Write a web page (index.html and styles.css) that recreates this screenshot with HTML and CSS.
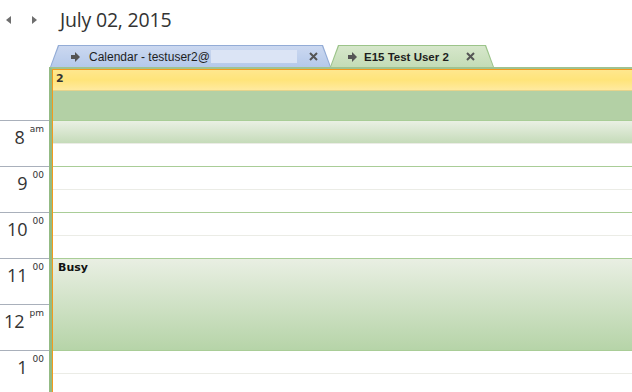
FILE: index.html
```html
<!DOCTYPE html>
<html lang="en">
<head>
    <meta charset="UTF-8">
    <link rel="stylesheet" href="styles.css">
    <title>Calendar</title>
</head>
<body>
    <div class="header">
        <span class="nav nav-left"></span>
        <span class="nav nav-right"></span>
        <h1 class="date">July 02, 2015</h1>
    </div>

    <div class="tabs">
        <div class="tab tab-blue">
            <div class="tab-in">
                <span class="tab-arrow"></span>
                <span class="tab-name">Calendar - testuser2@</span>
                <span class="redact"></span>
                <svg class="tab-close" width="9" height="9" viewBox="0 0 9 9"><path d="M1 1L8 8M8 1L1 8" stroke="#555" stroke-width="2"/></svg>
            </div>
        </div>
        <div class="tab tab-green">
            <div class="tab-in">
                <span class="tab-arrow"></span>
                <span class="tab-name bold">E15 Test User 2</span>
                <svg class="tab-close" width="9" height="9" viewBox="0 0 9 9"><path d="M1 1L8 8M8 1L1 8" stroke="#555" stroke-width="2"/></svg>
            </div>
        </div>
    </div>

    <div class="cal">
        <div class="times">
            <div class="times-top"></div>
            <div class="hour"><span class="h">8</span><sup>am</sup></div>
            <div class="hour"><span class="h">9</span><sup>00</sup></div>
            <div class="hour"><span class="h">10</span><sup>00</sup></div>
            <div class="hour"><span class="h">11</span><sup>00</sup></div>
            <div class="hour"><span class="h">12</span><sup>pm</sup></div>
            <div class="hour"><span class="h">1</span><sup>00</sup></div>
        </div>
        <div class="day">
            <div class="day-in">
                <div class="allday"><span>2</span></div>
                <div class="early"></div>
                <div class="slot hour-line shade"></div>
                <div class="slot"></div>
                <div class="slot hour-line"></div>
                <div class="slot"></div>
                <div class="slot hour-line"></div>
                <div class="slot"></div>
                <div class="busy"><span>Busy</span></div>
                <div class="slot hour-line"></div>
                <div class="slot"></div>
            </div>
        </div>
    </div>
</body>
</html>
```

FILE: styles.css
```css
body{
    margin: 0;
    background: white;
    font-family: 'Open Sans', 'DejaVu Sans', sans-serif;
    overflow: hidden;
}

.header{
    height: 45px;
    display: flex;
    align-items: center;
    padding-left: 6px;
}

.nav{
    width: 0;
    height: 0;
    border-top: 4px solid transparent;
    border-bottom: 4px solid transparent;
    margin-top: -6px;
}

.nav-left{
    border-right: 5px solid #6e6e6e;
    margin-right: 21px;
}

.nav-right{
    border-left: 5px solid #6e6e6e;
    margin-right: 23px;
}

.date{
    margin: -6px 0 0 0;
    font-weight: 400;
    font-size: 19.5px;
    color: #333;
    letter-spacing: -0.2px;
}

.tabs{
    height: 22px;
    display: flex;
    margin-left: 50px;
}

.tab{
    height: 22px;
    clip-path: polygon(8px 0, calc(100% - 8px) 0, 100% 100%, 0 100%);
}

.tab-in{
    height: 21px;
    margin: 1px 1px 0 1px;
    clip-path: polygon(8px 0, calc(100% - 8px) 0, 100% 100%, 0 100%);
    display: flex;
    align-items: center;
    font-family: 'Liberation Sans', sans-serif;
    font-size: 12px;
    color: #1e1e1e;
}

.tab-blue{
    width: 281px;
    background: #93acd6;
}

.tab-blue .tab-in{
    background: linear-gradient(#cbd8f0, #b5c9ea);
}

.tab-green{
    width: 164px;
    margin-left: -1px;
    background: #9cc48a;
}

.tab-green .tab-in{
    background: linear-gradient(#d6e7cb, #c4dcb6);
}

.tab-arrow{
    width: 4px;
    height: 4px;
    background: #555;
    position: relative;
    margin-left: 20px;
    margin-right: 14px;
}

.tab-arrow::after{
    content: "";
    position: absolute;
    left: 4px;
    top: -3px;
    border-top: 5px solid transparent;
    border-bottom: 5px solid transparent;
    border-left: 5px solid #555;
}

.tab-green .tab-arrow{
    margin-left: 17px;
    margin-right: 12px;
}

.bold{
    font-weight: bold;
    font-size: 11.5px;
}

.redact{
    width: 86px;
    height: 13px;
    background: #dbe4f5;
    margin-left: 1px;
}

.tab-close{
    margin-left: auto;
    margin-right: 12px;
}

.tab-green .tab-close{
    margin-right: 18px;
}

.cal{
    display: grid;
    grid-template-columns: 49px 1fr;
}

.times-top{
    height: 53px;
}

.hour{
    height: 45px;
    border-top: 1px solid #a9b0bb;
    text-align: right;
    padding-right: 5px;
    color: #333;
    line-height: 1;
}

.hour .h{
    font-size: 18px;
    font-weight: 400;
    display: inline-block;
    margin-top: 7px;
}

.hour sup{
    font-family: 'DejaVu Sans', sans-serif;
    font-size: 9px;
    vertical-align: top;
    display: inline-block;
    margin-top: 4px;
    margin-left: 5px;
}

.day{
    border-left: 3px solid #93bb84;
    border-top: 2px solid #9fc391;
    height: 330px;
}

.day-in{
    border-left: 1px solid #f29a1e;
    border-top: 1px solid #f29a1e;
    height: 100%;
}

.allday{
    height: 20px;
    border-bottom: 1px solid #e6d38a;
    background: linear-gradient(#ffe78e, #ffe47a 50%, #ffeaa0);
    font-family: 'DejaVu Sans', sans-serif;
    font-size: 11px;
    font-weight: bold;
    color: #333;
    padding-left: 3px;
    line-height: 18px;
}

.early{
    height: 29px;
    background: #b3d0a5;
}

.slot{
    height: 22px;
    border-top: 1px solid #ebece6;
}

.hour-line{
    border-top-color: #a9cd97;
}

.shade{
    background: linear-gradient(#eaf0e4, #c5dbb9);
}

.busy{
    border-top: 1px solid #a9cd97;
    border-bottom: 1px solid #a9cd97;
    margin-bottom: -1px;
    background: linear-gradient(#e9efe3, #b6d4a8);
    font-family: 'DejaVu Sans', sans-serif;
    font-size: 11px;
    font-weight: bold;
    color: #111;
    padding-left: 5px;
    line-height: 18px;
    box-sizing: border-box;
    height: 93px;
}
```
